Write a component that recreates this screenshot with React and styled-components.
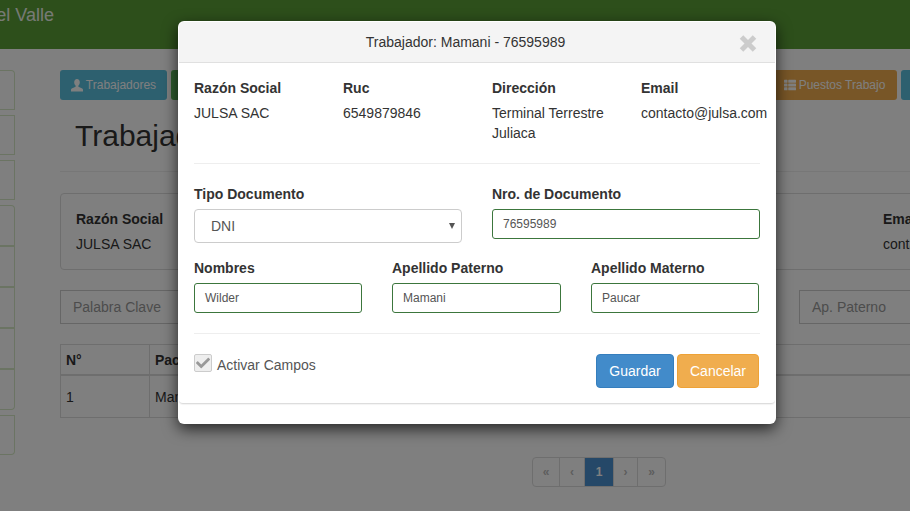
import React from 'react';
import styled, { createGlobalStyle } from 'styled-components';
import { FaThList, FaCheck } from 'react-icons/fa';

const GlobalStyle = createGlobalStyle`
    html, body {
        margin: 0;
        padding: 0;
        background: #fff;
    }
    body {
        font-family: "Liberation Sans", Arial, sans-serif;
        font-size: 14px;
        line-height: 20px;
        color: #333;
    }
    * {
        box-sizing: border-box;
    }
`;

const Screen = styled.div`
    position: relative;
    width: 910px;
    height: 511px;
    overflow: hidden;
    background: #fff;
`;

const TopBar = styled.div`
    height: 49px;
    background: #5a9e36;
`;

const Brand = styled.div`
    width: 54px;
    height: 30px;
    display: flex;
    justify-content: flex-end;
    overflow: hidden;
    white-space: nowrap;
    font-size: 18px;
    line-height: 30px;
    color: #fff;
    opacity: 0.9;
`;

const Content = styled.div`
    display: flex;
    gap: 45px;
    padding-top: 21px;
`;

const Side = styled.div`
    flex: none;
    width: 15px;
    display: flex;
    flex-direction: column;
    gap: 5px;
`;

const SideGroup = styled.div`
    display: flex;
    flex-direction: column;
`;

const SideItem = styled.div`
    height: ${(p) => p.$h || 40}px;
    border: 1px solid #d6e9c6;
    border-left: 0;
    &:first-child {
        border-top-right-radius: 4px;
    }
    &:last-child {
        border-bottom-right-radius: 4px;
    }
`;

const Main = styled.div`
    flex: none;
    width: 941px;
`;

const ButtonRow = styled.div`
    display: flex;
    justify-content: space-between;
`;

const ButtonGroup = styled.div`
    display: flex;
    gap: 4px;
`;

const NavButton = styled.div`
    width: ${(p) => p.$w}px;
    height: 30px;
    display: flex;
    align-items: center;
    justify-content: center;
    gap: 3px;
    border-radius: 3px;
    background: ${(p) => p.$bg};
    color: #fff;
    font-size: 12px;
    white-space: nowrap;
`;

const PageTitle = styled.h1`
    margin: 0;
    height: 72px;
    padding: 15px 0 0 15px;
    border-bottom: 1px solid #eee;
    font-size: 30px;
    font-weight: 400;
    line-height: 42px;
    color: #333;
`;

const InfoPanel = styled.div`
    margin-top: 21px;
    height: 77px;
    padding: 15px;
    display: grid;
    grid-template-columns: repeat(4, 269px);
    border: 1px solid #ddd;
    border-radius: 4px;
`;

const Label = styled.div`
    font-weight: 700;
    color: #333;
    margin-bottom: 5px;
`;

const Value = styled.div`
    color: #333;
`;

const FilterRow = styled.div`
    margin-top: 20px;
    display: flex;
    justify-content: space-between;
`;

const FilterInput = styled.div`
    width: 202px;
    height: 34px;
    padding: 6px 12px;
    border: 1px solid #ccc;
    color: #999;
`;

const Table = styled.div`
    margin-top: 20px;
    border: 1px solid #ddd;
    border-right: 0;
`;

const TableRow = styled.div`
    display: grid;
    grid-template-columns: 88px 1fr;
    height: ${(p) => p.$h}px;
    border-bottom: ${(p) => p.$b || '0'};
    font-weight: ${(p) => (p.$head ? 700 : 400)};
`;

const Cell = styled.div`
    display: flex;
    align-items: center;
    padding-left: 5px;
    & + & {
        border-left: 1px solid #ddd;
    }
`;

const Pager = styled.div`
    margin: 39px 0 0 472px;
    width: max-content;
    display: flex;
    height: 30px;
    border: 1px solid #ddd;
    border-radius: 4px;
    overflow: hidden;
`;

const PageCell = styled.div`
    width: ${(p) => p.$w}px;
    display: flex;
    align-items: center;
    justify-content: center;
    font-size: 12px;
    font-weight: 700;
    color: ${(p) => (p.$active ? '#fff' : '#bbb')};
    background: ${(p) => (p.$active ? '#4a90d0' : 'transparent')};
    & + & {
        border-left: ${(p) => (p.$active ? '0' : '1px solid #ddd')};
    }
`;

const Backdrop = styled.div`
    position: absolute;
    inset: 0;
    background: rgba(0, 0, 0, 0.5);
`;

const Modal = styled.div`
    position: absolute;
    left: 178px;
    top: 21px;
    width: 598px;
    height: 403px;
    display: flex;
    flex-direction: column;
    padding: 1px;
    background: #fff;
    border-radius: 6px;
    box-shadow: 0 5px 15px rgba(0, 0, 0, 0.7);
`;

const ModalHeader = styled.div`
    position: relative;
    flex: none;
    height: 41px;
    display: flex;
    align-items: center;
    justify-content: center;
    padding-right: 23px;
    background: #f4f4f4;
    border-bottom: 1px solid #e0e0e0;
    border-radius: 5px 5px 0 0;
`;

const CloseSvg = styled.svg`
    position: absolute;
    right: 18px;
    top: 13px;
    width: 18px;
    height: 17px;
    stroke: #ccc;
    stroke-width: 5;
`;

const ModalPanel = styled.div`
    height: 341px;
    padding: 15px 15px 0;
    border-bottom: 1px solid #ddd;
    border-radius: 0 0 4px 4px;
    box-shadow: 0 1px 1px rgba(0, 0, 0, 0.05);
`;

const InfoGrid = styled.div`
    display: grid;
    grid-template-columns: repeat(4, 149px);
    height: 85px;
    white-space: nowrap;
`;

const Divider = styled.hr`
    margin: ${(p) => p.$top || 0}px 0 0;
    border: 0;
    border-top: 1px solid #eee;
    width: 566px;
`;

const FormRow = styled.div`
    display: grid;
    grid-template-columns: ${(p) => p.$cols};
    justify-content: space-between;
    width: ${(p) => p.$w}px;
    margin-top: ${(p) => p.$top}px;
`;

const Field = styled.div`
    display: flex;
    flex-direction: column;
`;

const TextInput = styled.div`
    height: 30px;
    padding: 0 10px;
    display: flex;
    align-items: center;
    border: 1px solid #3c763d;
    border-radius: 3px;
    font-size: 12px;
    color: #555;
`;

const SelectBox = styled.div`
    height: 34px;
    padding: 0 6px 0 16px;
    display: flex;
    align-items: center;
    justify-content: space-between;
    border: 1px solid #ccc;
    border-radius: 4px;
    color: #555;
`;

const Caret = styled.span`
    width: 0;
    height: 0;
    border-left: 3px solid transparent;
    border-right: 3px solid transparent;
    border-top: 6px solid #555;
`;

const FooterRow = styled.div`
    display: flex;
    justify-content: space-between;
    width: 565px;
    margin-top: 20px;
`;

const CheckWrap = styled.div`
    display: flex;
    align-items: flex-start;
    gap: 5px;
    color: #555;
`;

const CheckBox = styled.span`
    width: 18px;
    height: 18px;
    display: flex;
    align-items: center;
    justify-content: center;
    background: #eee;
    border: 1px solid #ccc;
    border-radius: 2px;
    color: #999;
    font-size: 14px;
`;

const CheckLabel = styled.span`
    margin-top: 1px;
`;

const Actions = styled.div`
    display: flex;
    gap: 3px;
`;

const ActionButton = styled.div`
    width: ${(p) => p.$w}px;
    height: 34px;
    display: flex;
    align-items: center;
    justify-content: center;
    border: 1px solid ${(p) => p.$line};
    border-radius: 4px;
    background: ${(p) => p.$bg};
    color: #fff;
`;

const UserIcon = () => (
    <svg width="12" height="13" viewBox="0 0 12 13" fill="currentColor">
        <path d="M6 0C4.3 0 3.2 1.4 3.2 3.3c0 1.4.6 2.6 1.4 3.3v1.2L.8 9.5C.2 9.8 0 10.3 0 11v1.5h12V11c0-.7-.2-1.2-.8-1.5L7.4 7.8V6.6c.8-.7 1.4-1.9 1.4-3.3C8.8 1.4 7.7 0 6 0z" />
    </svg>
);

const App = () => {
    return (
        <Screen>
            <GlobalStyle />
            <TopBar>
                <Brand>del Valle</Brand>
            </TopBar>
            <Content>
                <Side>
                    <SideItem />
                    <SideItem />
                    <SideItem />
                    <SideGroup>
                        <SideItem $h={41} />
                        <SideItem $h={41} />
                        <SideItem $h={41} />
                        <SideItem $h={41} />
                        <SideItem $h={41} />
                    </SideGroup>
                    <SideItem />
                </Side>
                <Main>
                    <ButtonRow>
                        <ButtonGroup>
                            <NavButton $w={107} $bg="#5bc0de">
                                <UserIcon /> Trabajadores
                            </NavButton>
                            <NavButton $w={100} $bg="#5cb85c">Contratos</NavButton>
                        </ButtonGroup>
                        <ButtonGroup>
                            <NavButton $w={125} $bg="#f0ad4e">
                                <FaThList size={12} /> Puestos Trabajo
                            </NavButton>
                            <NavButton $w={100} $bg="#5bc0de">Reportes</NavButton>
                        </ButtonGroup>
                    </ButtonRow>
                    <PageTitle>Trabajadores</PageTitle>
                    <InfoPanel>
                        <div><Label>Razón Social</Label><Value>JULSA SAC</Value></div>
                        <div><Label>Ruc</Label><Value>6549879846</Value></div>
                        <div><Label>Dirección</Label><Value>Terminal Terrestre</Value></div>
                        <div><Label>Email</Label><Value>contacto@julsa.com</Value></div>
                    </InfoPanel>
                    <FilterRow>
                        <FilterInput>Palabra Clave</FilterInput>
                        <FilterInput>Ap. Paterno</FilterInput>
                    </FilterRow>
                    <Table>
                        <TableRow $h={31} $head $b="2px solid #ddd">
                            <Cell>N°</Cell>
                            <Cell>Paciente</Cell>
                        </TableRow>
                        <TableRow $h={41}>
                            <Cell>1</Cell>
                            <Cell>Mamani</Cell>
                        </TableRow>
                    </Table>
                    <Pager>
                        <PageCell $w={26}>«</PageCell>
                        <PageCell $w={25}>‹</PageCell>
                        <PageCell $w={29} $active>1</PageCell>
                        <PageCell $w={24}>›</PageCell>
                        <PageCell $w={28}>»</PageCell>
                    </Pager>
                </Main>
            </Content>
            <Backdrop />
            <Modal>
                <ModalHeader>
                    Trabajador: Mamani - 76595989
                    <CloseSvg viewBox="0 0 18 17">
                        <line x1="2.5" y1="2" x2="15.5" y2="15" />
                        <line x1="15.5" y1="2" x2="2.5" y2="15" />
                    </CloseSvg>
                </ModalHeader>
                <ModalPanel>
                    <InfoGrid>
                        <div><Label>Razón Social</Label><Value>JULSA SAC</Value></div>
                        <div><Label>Ruc</Label><Value>6549879846</Value></div>
                        <div><Label>Dirección</Label><Value>Terminal Terrestre<br />Juliaca</Value></div>
                        <div><Label>Email</Label><Value>contacto@julsa.com</Value></div>
                    </InfoGrid>
                    <Divider />
                    <FormRow $cols="268px 268px" $w={566} $top={20}>
                        <Field>
                            <Label>Tipo Documento</Label>
                            <SelectBox>DNI<Caret /></SelectBox>
                        </Field>
                        <Field>
                            <Label>Nro. de Documento</Label>
                            <TextInput>76595989</TextInput>
                        </Field>
                    </FormRow>
                    <FormRow $cols="168px 169px 168px" $w={565} $top={15}>
                        <Field>
                            <Label>Nombres</Label>
                            <TextInput>Wilder</TextInput>
                        </Field>
                        <Field>
                            <Label>Apellido Paterno</Label>
                            <TextInput>Mamani</TextInput>
                        </Field>
                        <Field>
                            <Label>Apellido Materno</Label>
                            <TextInput>Paucar</TextInput>
                        </Field>
                    </FormRow>
                    <Divider $top={20} />
                    <FooterRow>
                        <CheckWrap>
                            <CheckBox><FaCheck /></CheckBox>
                            <CheckLabel>Activar Campos</CheckLabel>
                        </CheckWrap>
                        <Actions>
                            <ActionButton $w={78} $bg="#428bca" $line="#357ebd">Guardar</ActionButton>
                            <ActionButton $w={82} $bg="#f0ad4e" $line="#eea236">Cancelar</ActionButton>
                        </Actions>
                    </FooterRow>
                </ModalPanel>
            </Modal>
        </Screen>
    );
};

export default App;
